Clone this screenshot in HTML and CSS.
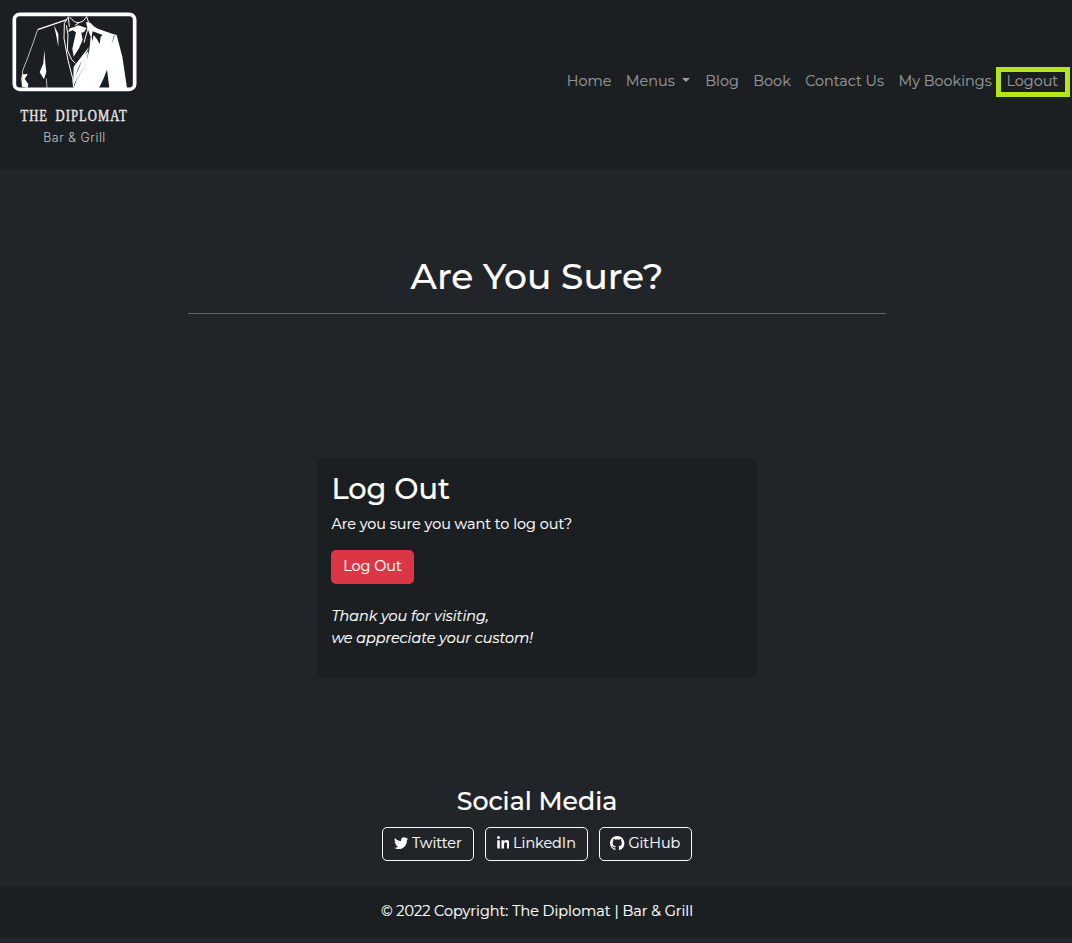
FILE: index.html
```html
<!DOCTYPE html>
<html lang="en">
<head>
<meta charset="utf-8">
<title>The Diplomat | Bar &amp; Grill</title>
<link rel="stylesheet" href="styles.css">
</head>
<body>
<header class="navbar">
  <a class="brand">
    <svg class="brand-mark" viewBox="36 36 375 240">
      <rect x="43" y="43" width="361" height="225" rx="16" fill="none" stroke="#fff" stroke-width="11"/>
      <path fill="#fff" d="M258 66 L271 68 Q282 82 304 90 L339 102 L350 105 L367 170 L381 264 L328 264 L321 209 L311 235 L297 264 L221 264 L228 244 L258 190 L268 150 L272 110 L262 84 Z"/>
      <path fill="#fff" d="M205 96 L209 85 Q221 84 234 76 L260 84 L252 96 L244 98 L248 119 L237 145 L221 170 L217 146 L228 97 L218 91 Z"/>
      <path fill="#fff" d="M221 200 L266 142 L260 188 L226 245 L219 262 Z"/>
      <path fill="#fff" d="M76 223 L83 221 L80 228 L74 236 L85 253 L83 264 L66 260 L64 236 L68 222 Z"/>
      <path fill="#fff" d="M133 150 L136 190 L139 216 L132 238 L119 217 L130 190 Z M162 76 L175 102 L175 141 L169 108 Z"/>
      <path fill="none" stroke="#fff" stroke-width="4" d="M201 59 L113 89"/>
      <path fill="none" stroke="#ddd" stroke-width="2.5" d="M113 89 L99 130 L79 184 L68 212 L66 238 M139 236 L141 264"/>
      <path fill="none" stroke="#fff" stroke-width="3" d="M205 50 L193 70 L192 115 L204 181 L218 235 L221 262 M199 76 L204 105 L202 150 L215 179 L226 190 M209 51 Q224 70 237 68 Q251 67 260 50 M205 52 L208 80 M260 50 L266 68 M237 68 L225 76 M264 84 L252 128"/>
      <path fill="#1b1f22" d="M278 94 L308 105 L302 110 L299 132 L291 118 L281 105 L277 124 L275 108 Z M342 106 L344 107 L334 135 Z M246 180 L237 205 L225 229 L238 197 Z M267 142 L264 153 L255 165 Z"/>
    </svg>
    <span class="brand-name">THE DIPLOMAT</span>
    <span class="brand-sub">Bar &amp; Grill</span>
  </a>
  <nav class="links">
    <a class="link">Home</a>
    <a class="link">Menus<i class="caret"></i></a>
    <a class="link">Blog</a>
    <a class="link">Book</a>
    <a class="link">Contact Us</a>
    <a class="link">My Bookings</a>
    <a class="link logout">Logout</a>
  </nav>
</header>
<main class="page">
  <h1 class="title">Are You Sure?</h1>
  <section class="card">
    <h2 class="card-title">Log Out</h2>
    <p class="question">Are you sure you want to log out?</p>
    <button class="btn-danger">Log Out</button>
    <p class="thanks">Thank you for visiting,<br>we appreciate your custom!</p>
  </section>
  <h3 class="social-title">Social Media</h3>
  <div class="social">
    <a class="btn twitter"><svg class="icon" viewBox="0 0 512 512"><path fill="currentColor" d="M459.37 151.716c.325 4.548.325 9.097.325 13.645 0 138.72-105.583 298.558-298.558 298.558-59.452 0-114.68-17.219-161.137-47.106 8.447.974 16.568 1.299 25.34 1.299 49.055 0 94.213-16.568 130.274-44.832-46.132-.975-84.792-31.188-98.112-72.772 6.498.974 12.995 1.624 19.818 1.624 9.421 0 18.843-1.3 27.614-3.573-48.081-9.747-84.143-51.98-84.143-102.985v-1.299c13.969 7.797 30.214 12.67 47.431 13.319-28.264-18.843-46.781-51.005-46.781-87.391 0-19.492 5.197-37.36 14.294-52.954 51.655 63.675 129.3 105.258 216.365 109.807-1.624-7.797-2.599-15.918-2.599-24.04 0-57.828 46.782-104.934 104.934-104.934 30.213 0 57.502 12.67 76.67 33.137 23.715-4.548 46.456-13.32 66.599-25.34-7.798 24.366-24.366 44.833-46.132 57.827 21.117-2.273 41.584-8.122 60.426-16.243-14.292 20.791-32.161 39.308-52.628 54.253z"/></svg><span>Twitter</span></a>
    <a class="btn linkedin"><svg class="icon in" viewBox="0 0 448 512"><path fill="currentColor" d="M100.28 448H7.4V148.9h92.88zM53.79 108.1C24.09 108.1 0 83.5 0 53.8a53.79 53.79 0 0 1 107.58 0c0 29.7-24.1 54.3-53.79 54.3zM447.9 448h-92.68V302.4c0-34.7-.7-79.2-48.29-79.2-48.29 0-55.69 37.7-55.69 76.7V448h-92.78V148.9h89.08v40.8h1.3c12.4-23.5 42.69-48.3 87.88-48.3 94 0 111.28 61.9 111.28 142.3V448z"/></svg><span>LinkedIn</span></a>
    <a class="btn github"><svg class="icon" viewBox="0 0 16 16"><path fill="currentColor" d="M8 0C3.58 0 0 3.58 0 8c0 3.54 2.29 6.53 5.47 7.59.4.07.55-.17.55-.38 0-.19-.01-.82-.01-1.49-2.01.37-2.53-.49-2.69-.94-.09-.23-.48-.94-.82-1.13-.28-.15-.68-.52-.01-.53.63-.01 1.08.58 1.23.82.72 1.21 1.87.87 2.33.66.07-.52.28-.87.51-1.07-1.78-.2-3.64-.89-3.64-3.95 0-.87.31-1.59.82-2.15-.08-.2-.36-1.02.08-2.12 0 0 .67-.21 2.2.82.64-.18 1.32-.27 2-.27s1.36.09 2 .27c1.53-1.04 2.2-.82 2.2-.82.44 1.1.16 1.92.08 2.12.51.56.82 1.27.82 2.15 0 3.07-1.87 3.75-3.65 3.95.29.25.54.73.54 1.48 0 1.07-.01 1.93-.01 2.2 0 .21.15.46.55.38A8.01 8.01 0 0 0 16 8c0-4.42-3.58-8-8-8z"/></svg><span>GitHub</span></a>
  </div>
</main>
<footer class="footer">© 2022 Copyright: The Diplomat | Bar &amp; Grill</footer>
</body>
</html>
```
FILE: styles.css
```css
* { box-sizing: border-box; }
body { margin: 0; height: 943px; overflow: hidden; background: #212529; color: #fff; font: 14.4px/22px Montserrat, Inter, sans-serif; -webkit-text-stroke: .15px currentColor; display: flex; flex-direction: column; }
h1, h2, h3, p { margin: 0; font-weight: 500; }
.navbar { height: 169px; background: #1b1f22; display: flex; justify-content: space-between; flex: none; }
.brand { width: 125px; margin: 12px 0 0 12px; display: flex; flex-direction: column; align-items: center; }
.brand-mark { width: 125px; height: 80px; }
.brand-name { font: 15.8px/18px "Liberation Serif", serif; color: #e8e8e8; -webkit-text-stroke: .4px #e8e8e8; margin-top: 15px; letter-spacing: 1.3px; word-spacing: 4px; white-space: nowrap; transform: scaleX(.8); }
.brand-sub { font-family: Inter, sans-serif; font-size: 12.4px; line-height: 16px; color: #c4c6c7; -webkit-text-stroke: 0; margin-top: 5px; letter-spacing: .55px; font-weight: 300; }
.links { display: flex; padding: 67px 2px 0 0; height: 97px; }
.link { display: flex; align-items: center; color: #949697; white-space: nowrap; padding: 0 7.2px 2px; }
.link:nth-child(2) { padding-right: 8px; }
.link:nth-child(6) { padding-right: 4.3px; }
.logout { width: 74px; border: 5px solid #b5e61d; padding: 0 0 2px 5.4px; }
.caret { border: 4.6px solid transparent; border-top-color: #9b9d9e; border-bottom: 0; margin: -2px 0 0 7.4px; }
.page { flex: none; height: 718px; padding-left: 2px; display: flex; flex-direction: column; align-items: center; }
.title { width: 698px; height: 145px; padding-top: 86px; border-bottom: 1px solid #606365; text-align: center; font-size: 36px; line-height: 43px; }
.card { width: 440px; height: 220px; margin-top: 144px; padding: 14px 14.4px; background: #1b1f22; border-radius: 6px; }
.card-title { font-size: 28.8px; line-height: 34px; }
.question { font-weight: 400; margin-top: 7px; }
.btn-danger { display: block; margin-top: 15px; margin-left: -.4px; width: 83px; height: 34px; padding: 0 0 2px; border: 0; border-radius: 5px; background: #dc3545; color: #fff; font: 14.4px Montserrat, Inter, sans-serif; }
.thanks { margin-top: 21px; font-style: italic; font-weight: 400; letter-spacing: -.03px; }
.social-title { margin-top: 107px; font-size: 25.2px; line-height: 32px; }
.social { display: flex; gap: 11px; margin-top: 10px; }
.btn { height: 34px; border: 1px solid #f8f9fa; border-radius: 5px; display: flex; align-items: center; justify-content: center; gap: 3.8px; padding: 0 .4px 2px 0; color: #f8f9fa; }
.twitter { width: 92px; }
.linkedin { width: 103px; }
.github { width: 93px; }
.icon { width: 14.4px; height: 14.4px; flex: none; }
.in { width: 12.6px; }
.footer { height: 50px; flex: none; padding: 13px 0 0 2px; background: #1b1f22; text-align: center; }
```
